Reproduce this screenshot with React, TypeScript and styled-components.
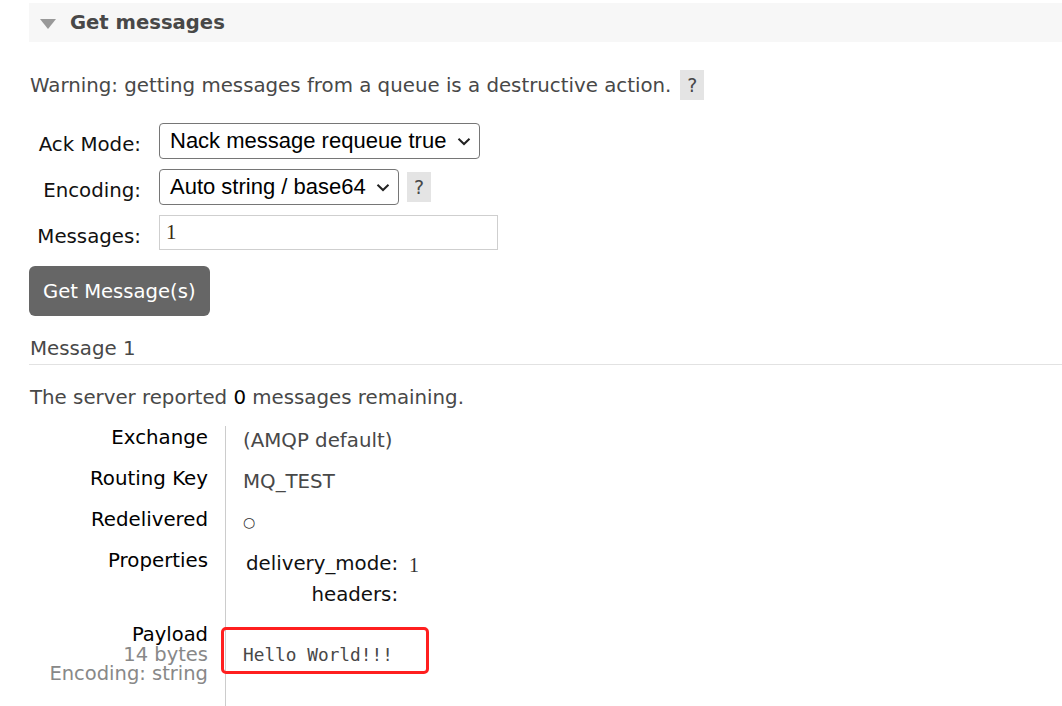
import React from "react";
import styled, { createGlobalStyle } from "styled-components";

const Global = createGlobalStyle`
  html, body { margin: 0; padding: 0; background: #fff; }
  body {
    font-family: "DejaVu Sans", Verdana, sans-serif;
    font-size: 19.8px;
    color: #484848;
  }
  * { box-sizing: border-box; }
`;

const Page = styled.div`
  width: 1062px;
  height: 706px;
  overflow: hidden;
  padding: 3px 0 0 29px;
`;

const SectionHeader = styled.div`
  height: 39px;
  background: #f7f7f7;
  display: flex;
  align-items: center;
  gap: 14px;
  padding-left: 11px;
`;

const Triangle = styled.span`
  width: 0;
  height: 0;
  border-left: 8.5px solid transparent;
  border-right: 8.5px solid transparent;
  border-top: 10px solid #999;
  margin-top: 2px;
`;

const Title = styled.h2`
  margin: 0;
  font-size: 19.6px;
  font-weight: bold;
  color: #484848;
`;

const Warning = styled.p`
  margin: 28px 0 0;
  display: flex;
  align-items: baseline;
  line-height: 24px;
  padding-left: 1px;
`;

const Help = styled.span<{ $gap?: number }>`
  display: inline-flex;
  align-items: center;
  justify-content: center;
  width: 24px;
  height: 30px;
  margin-left: ${(p) => p.$gap ?? 9}px;
  background: #e4e4e4;
  color: #484848;
  font-size: 19px;
`;

const Form = styled.div`
  margin-top: 23px;
  display: grid;
  grid-template-columns: 112px auto;
  column-gap: 18px;
  row-gap: 10px;
  align-items: center;
  justify-content: start;
`;

const Label = styled.label`
  text-align: right;
  color: #111;
  padding-top: 8px;
  line-height: 24px;
`;

const Field = styled.div`
  display: flex;
  align-items: center;
`;

const SelectBox = styled.div<{ $w: number }>`
  position: relative;
  width: ${(p) => p.$w}px;
  height: 36px;
  border: 1px solid #767676;
  border-radius: 4px;
  background: #fff;
  display: flex;
  align-items: center;
  padding: 0 8px 0 10px;
  font-family: "Liberation Sans", Arial, sans-serif;
  font-size: 22px;
  color: #000;
  justify-content: space-between;
`;

const Chevron = () => (
  <svg width="14" height="9" viewBox="0 0 14 9" style={{ flex: "none" }}>
    <polyline points="1.5,1.8 7,7 12.5,1.8" fill="none" stroke="#222" strokeWidth="2" />
  </svg>
);

const TextInput = styled.div`
  width: 339px;
  height: 35px;
  border: 1px solid #cfcfcf;
  display: flex;
  align-items: center;
  padding-left: 6px;
  font-family: "Liberation Serif", "Times New Roman", serif;
  font-size: 21px;
  color: #3a2a10;
`;

const Button = styled.button`
  margin-top: 16px;
  height: 50px;
  padding: 0 14px;
  background: #666;
  color: #fff;
  border: none;
  border-radius: 6px;
  font-family: "DejaVu Sans", Verdana, sans-serif;
  font-size: 19.6px;
  display: block;
`;

const MessageTitle = styled.div`
  margin-top: 21px;
  line-height: 24px;
  padding: 0 0 3px 1px;
  border-bottom: 1px solid #e2e2e2;
`;

const Remaining = styled.p`
  margin: 21px 0 0;
  line-height: 24px;
  padding-left: 1px;
  b { font-weight: normal; color: #000; }
`;

const Facts = styled.div`
  margin-top: 16px;
  display: grid;
  grid-template-columns: 196px 1fr;
`;

const FactLabel = styled.div<{ $pb?: number }>`
  text-align: right;
  padding-right: 17px;
  padding-bottom: ${(p) => p.$pb ?? 17}px;
  line-height: 24px;
  color: #000;
`;

const FactValue = styled.div<{ $pt?: number; $pb?: number }>`
  position: relative;
  border-left: 1px solid #cccccc;
  padding-left: 17px;
  padding-top: ${(p) => p.$pt ?? 3}px;
  padding-bottom: ${(p) => p.$pb ?? 0}px;
  line-height: 24px;
  color: #484848;
`;

const Circle = styled.span`
  display: block;
  font-size: 14px;
  line-height: 22px;
  color: #333;
`;

const PropsTable = styled.div`
  display: grid;
  grid-template-columns: auto auto;
  justify-content: start;
  align-items: end;
  column-gap: 11px;
  row-gap: 7px;
  padding-left: 3px;
  line-height: 24px;
`;

const PropKey = styled.span`
  text-align: right;
  color: #111;
`;

const PropVal = styled.span`
  font-family: "Liberation Serif", "Times New Roman", serif;
  font-size: 20px;
  line-height: 22px;
  color: #333;
`;

const PayloadLabel = styled(FactLabel)`
  font-size: 19.5px;
  line-height: 19.6px;
  padding-top: 2px;
  span { display: block; color: #888; }
  span:first-child { color: #000; }
`;

const Pre = styled.pre`
  margin: 0;
  font-family: "DejaVu Sans Mono", "Liberation Mono", monospace;
  font-size: 17.8px;
  line-height: 24px;
  color: #484848;
`;

const Highlight = styled.span`
  position: absolute;
  left: -5px;
  top: 4px;
  width: 208px;
  height: 47px;
  border: 3px solid #ff1f1f;
  border-radius: 5px;
  pointer-events: none;
`;

export default function App() {
  return (
    <>
      <Global />
      <Page>
        <SectionHeader>
          <Triangle />
          <Title>Get messages</Title>
        </SectionHeader>

        <Warning>
          Warning: getting messages from a queue is a destructive action.
          <Help>?</Help>
        </Warning>

        <Form>
          <Label>Ack Mode:</Label>
          <Field>
            <SelectBox $w={321}>
              <span>Nack message requeue true</span>
              <Chevron />
            </SelectBox>
          </Field>

          <Label>Encoding:</Label>
          <Field>
            <SelectBox $w={240}>
              <span>Auto string / base64</span>
              <Chevron />
            </SelectBox>
            <Help $gap={8}>?</Help>
          </Field>

          <Label>Messages:</Label>
          <Field>
            <TextInput>1</TextInput>
          </Field>
        </Form>

        <Button>Get Message(s)</Button>

        <MessageTitle>Message 1</MessageTitle>
        <Remaining>
          The server reported <b>0</b> messages remaining.
        </Remaining>

        <Facts>
          <FactLabel>Exchange</FactLabel>
          <FactValue>(AMQP default)</FactValue>

          <FactLabel>Routing Key</FactLabel>
          <FactValue>MQ_TEST</FactValue>

          <FactLabel>Redelivered</FactLabel>
          <FactValue>
            <Circle>○</Circle>
          </FactValue>

          <FactLabel $pb={16}>Properties</FactLabel>
          <FactValue $pb={16}>
            <PropsTable>
              <PropKey>delivery_mode:</PropKey>
              <PropVal>1</PropVal>
              <PropKey>headers:</PropKey>
              <span />
            </PropsTable>
          </FactValue>

          <PayloadLabel $pb={24}>
            <span>Payload</span>
            <span>14 bytes</span>
            <span>Encoding: string</span>
          </PayloadLabel>
          <FactValue $pt={20}>
            <Pre>Hello World!!!</Pre>
            <Highlight />
          </FactValue>
        </Facts>
      </Page>
    </>
  );
}
